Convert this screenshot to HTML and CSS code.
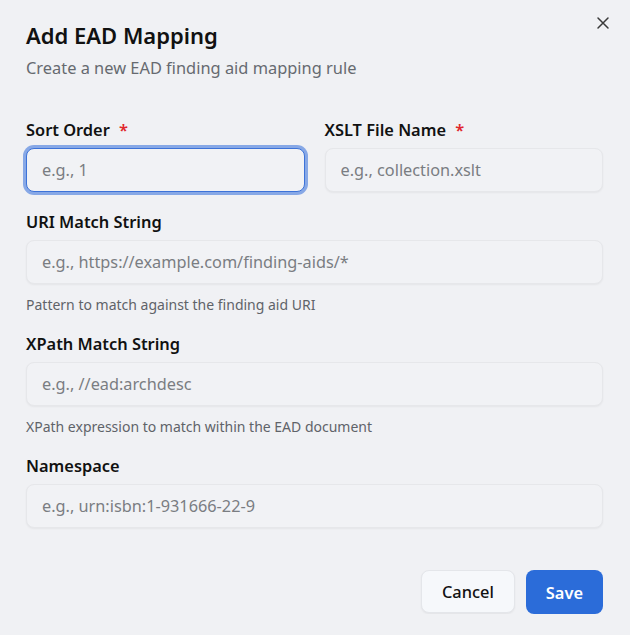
FILE: index.html
```html
<!DOCTYPE html>
<html lang="en">
<head>
  <meta charset="UTF-8" />
  <meta name="viewport" content="width=device-width, initial-scale=1.0" />
  <title>Add EAD Mapping</title>
  <link rel="stylesheet" href="styles.css">
</head>
<body>
  <div class="dialog">
    <button class="close-btn" aria-label="Close">
      <svg width="16" height="16" viewBox="0 0 16 16" fill="none" stroke="#3a3a3a" stroke-width="1.5" stroke-linecap="round">
        <path d="M3 3L13 13M13 3L3 13"/>
      </svg>
    </button>

    <header class="dialog-header">
      <h1>Add EAD Mapping</h1>
      <p>Create a new EAD finding aid mapping rule</p>
    </header>

    <form class="dialog-form">
      <div class="row">
        <div class="field">
          <label for="sortOrder">Sort Order <span class="req">*</span></label>
          <input id="sortOrder" class="text-input is-focused" type="text" placeholder="e.g., 1" autofocus>
        </div>
        <div class="field">
          <label for="xsltName">XSLT File Name <span class="req">*</span></label>
          <input id="xsltName" class="text-input" type="text" placeholder="e.g., collection.xslt">
        </div>
      </div>

      <div class="field">
        <label for="uriMatch">URI Match String</label>
        <input id="uriMatch" class="text-input" type="text" placeholder="e.g., https://example.com/finding-aids/*">
        <small class="hint">Pattern to match against the finding aid URI</small>
      </div>

      <div class="field">
        <label for="xpathMatch">XPath Match String</label>
        <input id="xpathMatch" class="text-input" type="text" placeholder="e.g., //ead:archdesc">
        <small class="hint">XPath expression to match within the EAD document</small>
      </div>

      <div class="field">
        <label for="namespace">Namespace</label>
        <input id="namespace" class="text-input" type="text" placeholder="e.g., urn:isbn:1-931666-22-9">
      </div>

      <div class="actions">
        <button type="button" class="btn btn-cancel">Cancel</button>
        <button type="button" class="btn btn-save">Save</button>
      </div>
    </form>
  </div>
</body>
</html>
```

FILE: styles.css
```css
/* Global Styles */
body {
  font-family: "Noto Sans", "Open Sans", Arial, sans-serif;
  margin: 0;
  padding: 0;
  background: #f0f1f4;
  color: #111;
}
.dialog {
  position: relative;
  padding: 19px 27px 0 26px;
}
.close-btn {
  position: absolute;
  top: 11px;
  right: 15px;
  width: 24px;
  height: 24px;
  padding: 0;
  border: none;
  background: none;
  display: flex;
  align-items: center;
  justify-content: center;
  cursor: pointer;
}

/* Header */
.dialog-header h1 {
  margin: 0;
  font-size: 22px;
  font-weight: 600;
  line-height: 32px;
}
.dialog-header p {
  margin: 5px 0 0;
  font-size: 16.4px;
  line-height: 24px;
  color: #666a70;
}

/* Form */
.dialog-form {
  margin-top: 38px;
  display: flex;
  flex-direction: column;
  gap: 17px;
}
.row {
  display: grid;
  grid-template-columns: 1fr 1fr;
  gap: 20px;
  margin-bottom: 1px;
}
.field {
  display: flex;
  flex-direction: column;
}
.field label {
  font-size: 16.4px;
  font-weight: 600;
  line-height: 24px;
  margin-bottom: 6px;
}
.req {
  color: #e0262b;
  margin-left: 5px;
}
.text-input {
  height: 44px;
  box-sizing: border-box;
  padding: 0 15px;
  font-family: inherit;
  font-size: 16.3px;
  color: #222;
  background: #f1f2f5;
  border: 1px solid #e6e7ea;
  border-radius: 8px;
  box-shadow: 0 1px 2px rgba(0, 0, 0, 0.05);
  outline: none;
}
.text-input::placeholder {
  color: #7a7d82;
}
.text-input.is-focused,
.text-input:focus {
  border: 1px solid #3d73d8;
  box-shadow: 0 0 0 3px #87a8e6;
}
.hint {
  margin-top: 11px;
  font-size: 14px;
  line-height: 20px;
  color: #5f6369;
}

/* Buttons */
.actions {
  display: flex;
  justify-content: flex-end;
  gap: 11px;
  margin-top: 25px;
}
.btn {
  font-family: inherit;
  font-size: 16.4px;
  font-weight: 500;
  height: 43px;
  padding: 0 20px;
  border-radius: 8px;
  cursor: pointer;
}
.btn-cancel {
  background: #f6f8fb;
  color: #111;
  border: 1px solid #e4e6ea;
  box-shadow: 0 1px 2px rgba(0, 0, 0, 0.06);
}
.btn-save {
  background: #2b6cd9;
  color: #fff;
  border: none;
  font-weight: 600;
  height: 44px;
  padding: 0 20px;
}
```
